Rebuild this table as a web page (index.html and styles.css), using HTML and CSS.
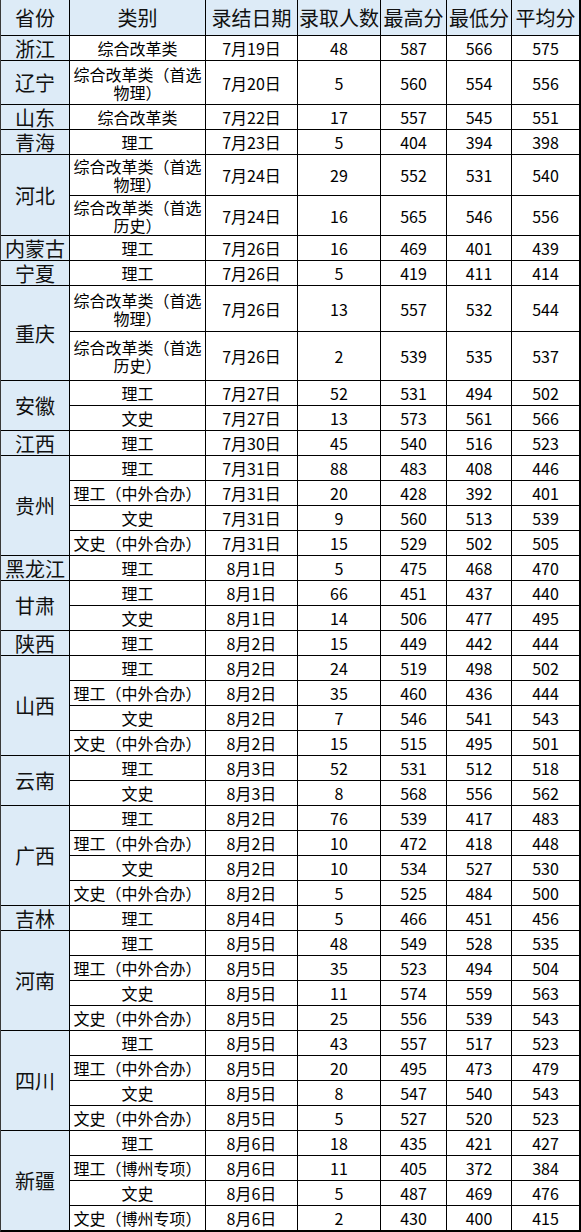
FILE: index.html
```html
<!DOCTYPE html>
<html lang="zh-CN">
<head>
<meta charset="utf-8">
<title>录取分数</title>
<link rel="stylesheet" href="styles.css">
</head>
<body>
<div class="sheet">
  <div class="hd">省份</div><div class="hd">类别</div><div class="hd">录结日期</div><div class="hd">录取人数</div><div class="hd">最高分</div><div class="hd">最低分</div><div class="hd">平均分</div>

  <div class="pv">浙江</div><div class="c">综合改革类</div><div class="c">7月19日</div><div class="c n">48</div><div class="c n">587</div><div class="c n">566</div><div class="c n">575</div>
  <div class="pv">辽宁</div><div class="c">综合改革类（首选物理）</div><div class="c">7月20日</div><div class="c n">5</div><div class="c n">560</div><div class="c n">554</div><div class="c n">556</div>
  <div class="pv">山东</div><div class="c">综合改革类</div><div class="c">7月22日</div><div class="c n">17</div><div class="c n">557</div><div class="c n">545</div><div class="c n">551</div>
  <div class="pv">青海</div><div class="c">理工</div><div class="c">7月23日</div><div class="c n">5</div><div class="c n">404</div><div class="c n">394</div><div class="c n">398</div>

  <div class="pv s2">河北</div><div class="c">综合改革类（首选物理）</div><div class="c">7月24日</div><div class="c n">29</div><div class="c n">552</div><div class="c n">531</div><div class="c n">540</div>
  <div class="c">综合改革类（首选历史）</div><div class="c">7月24日</div><div class="c n">16</div><div class="c n">565</div><div class="c n">546</div><div class="c n">556</div>

  <div class="pv">内蒙古</div><div class="c">理工</div><div class="c">7月26日</div><div class="c n">16</div><div class="c n">469</div><div class="c n">401</div><div class="c n">439</div>
  <div class="pv">宁夏</div><div class="c">理工</div><div class="c">7月26日</div><div class="c n">5</div><div class="c n">419</div><div class="c n">411</div><div class="c n">414</div>

  <div class="pv s2">重庆</div><div class="c">综合改革类（首选物理）</div><div class="c">7月26日</div><div class="c n">13</div><div class="c n">557</div><div class="c n">532</div><div class="c n">544</div>
  <div class="c">综合改革类（首选历史）</div><div class="c">7月26日</div><div class="c n">2</div><div class="c n">539</div><div class="c n">535</div><div class="c n">537</div>

  <div class="pv s2">安徽</div><div class="c">理工</div><div class="c">7月27日</div><div class="c n">52</div><div class="c n">531</div><div class="c n">494</div><div class="c n">502</div>
  <div class="c">文史</div><div class="c">7月27日</div><div class="c n">13</div><div class="c n">573</div><div class="c n">561</div><div class="c n">566</div>

  <div class="pv">江西</div><div class="c">理工</div><div class="c">7月30日</div><div class="c n">45</div><div class="c n">540</div><div class="c n">516</div><div class="c n">523</div>

  <div class="pv s4">贵州</div><div class="c">理工</div><div class="c">7月31日</div><div class="c n">88</div><div class="c n">483</div><div class="c n">408</div><div class="c n">446</div>
  <div class="c">理工（中外合办）</div><div class="c">7月31日</div><div class="c n">20</div><div class="c n">428</div><div class="c n">392</div><div class="c n">401</div>
  <div class="c">文史</div><div class="c">7月31日</div><div class="c n">9</div><div class="c n">560</div><div class="c n">513</div><div class="c n">539</div>
  <div class="c">文史（中外合办）</div><div class="c">7月31日</div><div class="c n">15</div><div class="c n">529</div><div class="c n">502</div><div class="c n">505</div>

  <div class="pv">黑龙江</div><div class="c">理工</div><div class="c">8月1日</div><div class="c n">5</div><div class="c n">475</div><div class="c n">468</div><div class="c n">470</div>

  <div class="pv s2">甘肃</div><div class="c">理工</div><div class="c">8月1日</div><div class="c n">66</div><div class="c n">451</div><div class="c n">437</div><div class="c n">440</div>
  <div class="c">文史</div><div class="c">8月1日</div><div class="c n">14</div><div class="c n">506</div><div class="c n">477</div><div class="c n">495</div>

  <div class="pv">陕西</div><div class="c">理工</div><div class="c">8月2日</div><div class="c n">15</div><div class="c n">449</div><div class="c n">442</div><div class="c n">444</div>

  <div class="pv s4">山西</div><div class="c">理工</div><div class="c">8月2日</div><div class="c n">24</div><div class="c n">519</div><div class="c n">498</div><div class="c n">502</div>
  <div class="c">理工（中外合办）</div><div class="c">8月2日</div><div class="c n">35</div><div class="c n">460</div><div class="c n">436</div><div class="c n">444</div>
  <div class="c">文史</div><div class="c">8月2日</div><div class="c n">7</div><div class="c n">546</div><div class="c n">541</div><div class="c n">543</div>
  <div class="c">文史（中外合办）</div><div class="c">8月2日</div><div class="c n">15</div><div class="c n">515</div><div class="c n">495</div><div class="c n">501</div>

  <div class="pv s2">云南</div><div class="c">理工</div><div class="c">8月3日</div><div class="c n">52</div><div class="c n">531</div><div class="c n">512</div><div class="c n">518</div>
  <div class="c">文史</div><div class="c">8月3日</div><div class="c n">8</div><div class="c n">568</div><div class="c n">556</div><div class="c n">562</div>

  <div class="pv s4">广西</div><div class="c">理工</div><div class="c">8月2日</div><div class="c n">76</div><div class="c n">539</div><div class="c n">417</div><div class="c n">483</div>
  <div class="c">理工（中外合办）</div><div class="c">8月2日</div><div class="c n">10</div><div class="c n">472</div><div class="c n">418</div><div class="c n">448</div>
  <div class="c">文史</div><div class="c">8月2日</div><div class="c n">10</div><div class="c n">534</div><div class="c n">527</div><div class="c n">530</div>
  <div class="c">文史（中外合办）</div><div class="c">8月2日</div><div class="c n">5</div><div class="c n">525</div><div class="c n">484</div><div class="c n">500</div>

  <div class="pv">吉林</div><div class="c">理工</div><div class="c">8月4日</div><div class="c n">5</div><div class="c n">466</div><div class="c n">451</div><div class="c n">456</div>

  <div class="pv s4">河南</div><div class="c">理工</div><div class="c">8月5日</div><div class="c n">48</div><div class="c n">549</div><div class="c n">528</div><div class="c n">535</div>
  <div class="c">理工（中外合办）</div><div class="c">8月5日</div><div class="c n">35</div><div class="c n">523</div><div class="c n">494</div><div class="c n">504</div>
  <div class="c">文史</div><div class="c">8月5日</div><div class="c n">11</div><div class="c n">574</div><div class="c n">559</div><div class="c n">563</div>
  <div class="c">文史（中外合办）</div><div class="c">8月5日</div><div class="c n">25</div><div class="c n">556</div><div class="c n">539</div><div class="c n">543</div>

  <div class="pv s4">四川</div><div class="c">理工</div><div class="c">8月5日</div><div class="c n">43</div><div class="c n">557</div><div class="c n">517</div><div class="c n">523</div>
  <div class="c">理工（中外合办）</div><div class="c">8月5日</div><div class="c n">20</div><div class="c n">495</div><div class="c n">473</div><div class="c n">479</div>
  <div class="c">文史</div><div class="c">8月5日</div><div class="c n">8</div><div class="c n">547</div><div class="c n">540</div><div class="c n">543</div>
  <div class="c">文史（中外合办）</div><div class="c">8月5日</div><div class="c n">5</div><div class="c n">527</div><div class="c n">520</div><div class="c n">523</div>

  <div class="pv s4">新疆</div><div class="c">理工</div><div class="c">8月6日</div><div class="c n">18</div><div class="c n">435</div><div class="c n">421</div><div class="c n">427</div>
  <div class="c">理工（博州专项）</div><div class="c">8月6日</div><div class="c n">11</div><div class="c n">405</div><div class="c n">372</div><div class="c n">384</div>
  <div class="c">文史</div><div class="c">8月6日</div><div class="c n">5</div><div class="c n">487</div><div class="c n">469</div><div class="c n">476</div>
  <div class="c">文史（博州专项）</div><div class="c">8月6日</div><div class="c n">2</div><div class="c n">430</div><div class="c n">400</div><div class="c n">415</div>
</div>
</body>
</html>
```
FILE: styles.css
```css
html, body {
  margin: 0;
  padding: 0;
  background: #ffffff;
}

.sheet {
  display: grid;
  grid-template-columns: 69px 136px 92px 83px 66px 65px 68px;
  grid-template-rows: 36px 25px 44px 25px 25px 41px 40px 25px 25px 46px 49px;
  grid-auto-rows: 25px;
  width: 581px;
  box-sizing: border-box;
  border-left: 1px solid #3a3a3a;
  border-right: 1px solid #000;
  border-bottom: 1px solid #000;
  font-family: "Noto Sans CJK SC", "Noto Sans", sans-serif;
  color: #000;
}

.hd, .pv, .c {
  display: flex;
  align-items: center;
  justify-content: center;
  text-align: center;
  border-right: 1px solid #000;
  border-bottom: 1px solid #000;
  box-sizing: border-box;
}

.hd {
  background: #ddebf7;
  font-size: 20px;
  line-height: 24px;
  color: #111;
}

.pv {
  background: #ddebf7;
  font-size: 20px;
  line-height: 23px;
  color: #111;
}

.s2 { grid-row: span 2; }
.s4 { grid-row: span 4; }

.c {
  background: #fff;
  font-size: 16px;
  line-height: 18px;
  padding: 0;
}

.n {
  font-size: 16px;
}
```
